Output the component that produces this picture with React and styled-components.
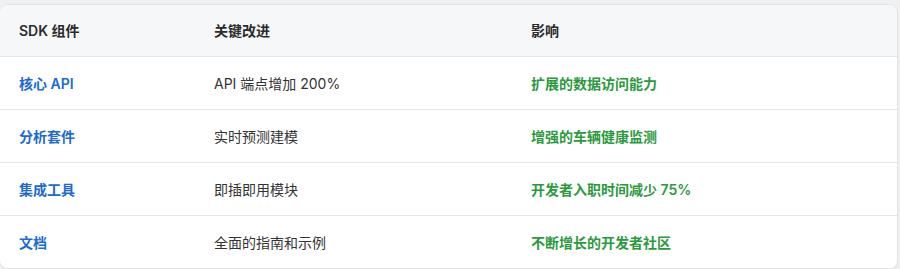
import React from "react";
import styled, { createGlobalStyle } from "styled-components";

const GlobalStyle = createGlobalStyle`
  html, body {
    margin: 0;
    padding: 0;
    background: #f0f0f0;
  }
  body {
    font-family: -apple-system, "Inter", "Noto Sans CJK SC", "Liberation Sans", sans-serif;
  }
`;

const Card = styled.div`
  width: 898px;
  margin-top: 4px;
  background: #ffffff;
  border: 1px solid #e4e4e4;
  border-left: none;
  border-radius: 8px;
  overflow: hidden;
  box-sizing: border-box;
  box-shadow: 0 1px 2px rgba(0, 0, 0, 0.04);
`;

const Table = styled.table`
  width: 100%;
  border-collapse: collapse;
  font-size: 14px;
`;

const HeadCell = styled.th`
  height: 51px;
  padding: 0 19px;
  text-align: left;
  font-weight: 600;
  color: #2b2b2b;
  background: #f6f7f9;
  border-bottom: 1px solid #e5e5e5;
  width: ${(p) => p.$width || "auto"};
  box-sizing: border-box;
`;

const Row = styled.tr`
  & + & td {
    border-top: 1px solid #e5e5e5;
  }
`;

const Cell = styled.td`
  height: 52px;
  padding: 0 19px;
  color: ${(p) =>
    p.$tone === "blue" ? "#1a6ad2" : p.$tone === "green" ? "#2b9a3e" : "#333333"};
  font-weight: ${(p) => (p.$tone ? 600 : 400)};
`;

const rows = [
  { name: "核心 API", change: "API 端点增加 200%", impact: "扩展的数据访问能力" },
  { name: "分析套件", change: "实时预测建模", impact: "增强的车辆健康监测" },
  { name: "集成工具", change: "即插即用模块", impact: "开发者入职时间减少 75%" },
  { name: "文档", change: "全面的指南和示例", impact: "不断增长的开发者社区" },
];

function App() {
  return (
    <>
      <GlobalStyle />
      <Card>
        <Table>
          <thead>
            <tr>
              <HeadCell $width="195px">SDK 组件</HeadCell>
              <HeadCell $width="317px">关键改进</HeadCell>
              <HeadCell>影响</HeadCell>
            </tr>
          </thead>
          <tbody>
            {rows.map(({ name, change, impact }) => (
              <Row key={name}>
                <Cell $tone="blue">{name}</Cell>
                <Cell>{change}</Cell>
                <Cell $tone="green">{impact}</Cell>
              </Row>
            ))}
          </tbody>
        </Table>
      </Card>
    </>
  );
}

export default App;
